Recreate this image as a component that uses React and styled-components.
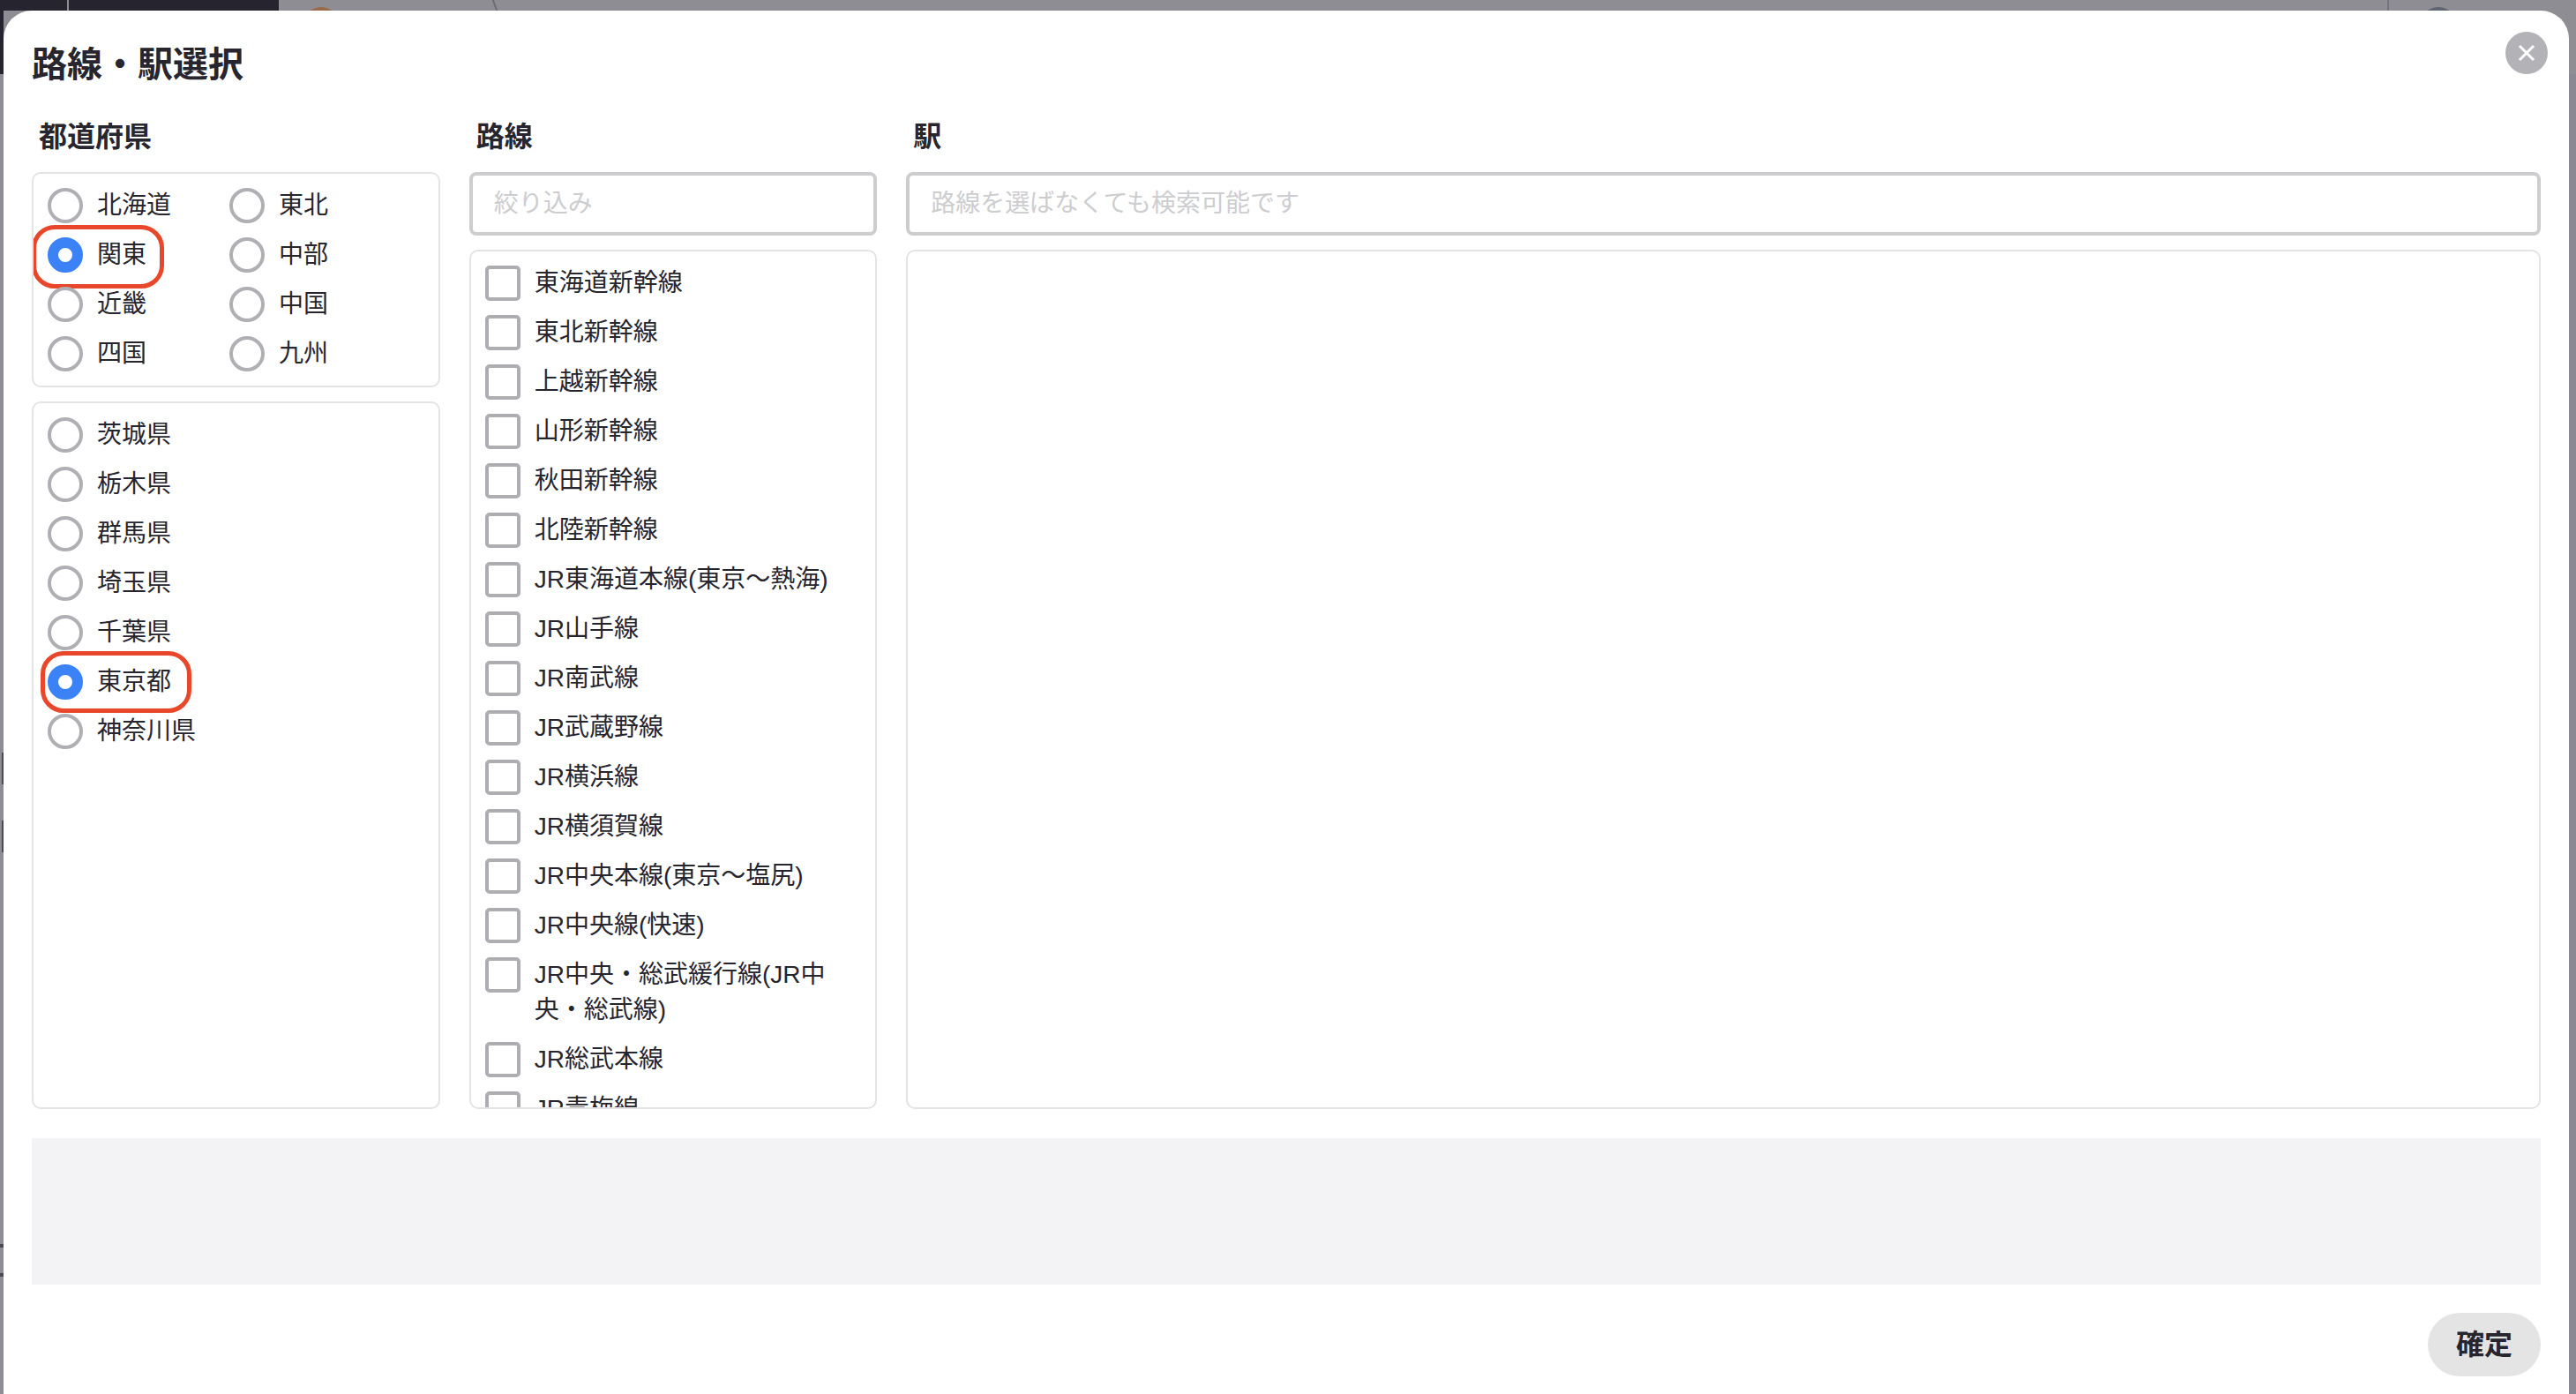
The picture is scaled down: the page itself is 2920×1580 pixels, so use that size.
import React from "react";
import styled, { createGlobalStyle } from "styled-components";

const Global = createGlobalStyle`
  html, body { margin: 0; padding: 0; height: 100%; overflow: hidden; background: #8b8a92; }
  * { box-sizing: border-box; }
  body { font-family: "Liberation Sans", "Noto Sans CJK JP", sans-serif; color: #27252e; }
`;

const Backdrop = styled.div`
  position: fixed;
  inset: 0;
  background: #8e8d93;
  overflow: hidden;
`;

const Decor = styled.div`
  position: absolute;
  left: ${(p) => p.$x}px;
  top: ${(p) => p.$y}px;
  width: ${(p) => p.$w}px;
  height: ${(p) => p.$h}px;
  background: ${(p) => p.$c};
  border-radius: ${(p) => p.$r || 0}px;
  transform: ${(p) => p.$t || "none"};
`;

const Modal = styled.div`
  position: absolute;
  top: 12px;
  left: 4px;
  right: 8px;
  bottom: -40px;
  background: #fff;
  border-radius: 32px 32px 0 0;
  padding: 33px 32px 0;
  display: flex;
  flex-direction: column;
`;

const Title = styled.h1`
  margin: 0 0 34px;
  font-size: 40px;
  line-height: 56px;
  font-weight: 700;
  color: #27252e;
`;

const CloseButton = styled.button`
  position: absolute;
  top: 24px;
  right: 24px;
  width: 48px;
  height: 48px;
  padding: 0;
  border: 0;
  border-radius: 50%;
  background: #b3b2b6;
  display: flex;
  align-items: center;
  justify-content: center;
`;

const Columns = styled.div`
  display: grid;
  grid-template-columns: 462.67px 462.67px 1fr;
  column-gap: 33px;
  height: 1122px;
`;

const Column = styled.section`
  display: flex;
  flex-direction: column;
  min-height: 0;
`;

const Label = styled.h2`
  margin: 0 0 20px;
  padding-left: 8px;
  font-size: 32px;
  line-height: 40px;
  font-weight: 700;
  color: #27252e;
`;

const Panel = styled.div`
  border: 2px solid #e4e4e7;
  border-radius: 10px;
  padding: 16px;
  background: #fff;
  overflow: hidden;
  ${(p) => (p.$grow ? "flex: 1; min-height: 0;" : "")}
  & + & { margin-top: 16px; }
`;

const RegionGrid = styled.div`
  display: grid;
  grid-template-columns: 206px 1fr;
  row-gap: 16px;
`;

const Stack = styled.div`
  display: flex;
  flex-direction: column;
  gap: 16px;
  padding-right: ${(p) => p.$inset || 0}px;
`;

const Row = styled.label`
  position: relative;
  display: flex;
  align-items: flex-start;
  gap: 16px;
  font-size: 28px;
  line-height: 40px;
  color: #27252e;
`;

const Radio = styled.span`
  flex: none;
  width: 40px;
  height: 40px;
  border-radius: 50%;
  border: ${(p) => (p.$on ? "12px solid #3b82f6" : "4px solid #b0afb3")};
  background: #fff;
`;

const Check = styled.span`
  flex: none;
  width: 40px;
  height: 40px;
  border-radius: 5px;
  border: 4px solid #aeadb2;
  background: #fff;
`;

const Highlight = styled.span`
  position: absolute;
  left: ${(p) => p.$left}px;
  top: ${(p) => p.$top}px;
  width: ${(p) => p.$width}px;
  height: ${(p) => p.$height}px;
  border: 5px solid #e8472b;
  border-radius: 26px;
  pointer-events: none;
`;

const SearchInput = styled.input`
  flex: none;
  display: block;
  width: 100%;
  height: 72px;
  margin-bottom: 16px;
  padding: 0 24px;
  border: 4px solid #cdcdcf;
  border-radius: 8px;
  outline: none;
  background: #fff;
  font: 28px "Liberation Sans", "Noto Sans CJK JP", sans-serif;
  color: #27252e;
  &::placeholder { color: #cdcdd0; opacity: 1; }
`;

const Summary = styled.div`
  flex: none;
  height: 166px;
  margin-top: 33px;
  background: #f3f3f5;
`;

const Footer = styled.div`
  flex: none;
  margin-top: 32px;
  display: flex;
  justify-content: flex-end;
`;

const ConfirmButton = styled.button`
  width: 128px;
  height: 72px;
  padding: 0 0 6px;
  border: 0;
  border-radius: 36px;
  background: #e4e4e5;
  font: 700 32px "Liberation Sans", "Noto Sans CJK JP", sans-serif;
  color: #27252e;
`;

const regions = ["北海道", "東北", "関東", "中部", "近畿", "中国", "四国", "九州"];
const prefectures = ["茨城県", "栃木県", "群馬県", "埼玉県", "千葉県", "東京都", "神奈川県"];
const lines = [
  "東海道新幹線", "東北新幹線", "上越新幹線", "山形新幹線", "秋田新幹線", "北陸新幹線",
  "JR東海道本線(東京〜熱海)", "JR山手線", "JR南武線", "JR武蔵野線", "JR横浜線", "JR横須賀線",
  "JR中央本線(東京〜塩尻)", "JR中央線(快速)", "JR中央・総武緩行線(JR中央・総武線)", "JR総武本線", "JR青梅線",
];

const decor = [
  { $x: 0, $y: 0, $w: 316, $h: 12, $c: "#26242e" },
  { $x: 0, $y: 0, $w: 4, $h: 84, $c: "#26242e" },
  { $x: 76, $y: 0, $w: 2, $h: 12, $c: "#8e8d93" },
  { $x: 344, $y: 8, $w: 40, $h: 40, $r: 20, $c: "#9a6a48" },
  { $x: 560, $y: -1, $w: 1.5, $h: 14, $c: "#6d6c74", $t: "rotate(-20deg)" },
  { $x: 2706, $y: 0, $w: 2, $h: 12, $c: "#75747c" },
  { $x: 2742, $y: 8, $w: 44, $h: 44, $r: 22, $c: "#5d6570" },
  { $x: 2912, $y: 84, $w: 8, $h: 1496, $c: "#8a8892" },
  { $x: 2, $y: 853, $w: 2, $h: 36, $c: "#4b4a52" },
  { $x: 2, $y: 930, $w: 2, $h: 36, $c: "#4b4a52" },
  { $x: 0, $y: 1410, $w: 4, $h: 4, $c: "#4b4a52" },
  { $x: 0, $y: 1443, $w: 4, $h: 4, $c: "#4b4a52" },
];

export default function App() {
  return (
    <>
      <Global />
      <Backdrop>
        {decor.map((d, i) => (
          <Decor key={i} {...d} />
        ))}
        <Modal>
          <Title>路線・駅選択</Title>
          <CloseButton aria-label="閉じる">
            <svg width="22" height="22" viewBox="0 0 22 22" fill="none" stroke="#fff" strokeWidth="3">
              <path d="M3 3l16 16M19 3L3 19" />
            </svg>
          </CloseButton>
          <Columns>
            <Column>
              <Label>都道府県</Label>
              <Panel>
                <RegionGrid>
                  {regions.map((r) => (
                    <Row key={r}>
                      <Radio $on={r === "関東"} />
                      {r}
                      {r === "関東" && <Highlight $left={-18} $top={-14} $width={150} $height={72} />}
                    </Row>
                  ))}
                </RegionGrid>
              </Panel>
              <Panel $grow>
                <Stack>
                  {prefectures.map((p) => (
                    <Row key={p}>
                      <Radio $on={p === "東京都"} />
                      {p}
                      {p === "東京都" && <Highlight $left={-8} $top={-15} $width={171} $height={70} />}
                    </Row>
                  ))}
                </Stack>
              </Panel>
            </Column>
            <Column>
              <Label>路線</Label>
              <SearchInput placeholder="絞り込み" />
              <Panel $grow>
                <Stack $inset={30}>
                  {lines.map((l) => (
                    <Row key={l}>
                      <Check />
                      <span>{l}</span>
                    </Row>
                  ))}
                </Stack>
              </Panel>
            </Column>
            <Column>
              <Label>駅</Label>
              <SearchInput placeholder="路線を選ばなくても検索可能です" />
              <Panel $grow />
            </Column>
          </Columns>
          <Summary />
          <Footer>
            <ConfirmButton>確定</ConfirmButton>
          </Footer>
        </Modal>
      </Backdrop>
    </>
  );
}
